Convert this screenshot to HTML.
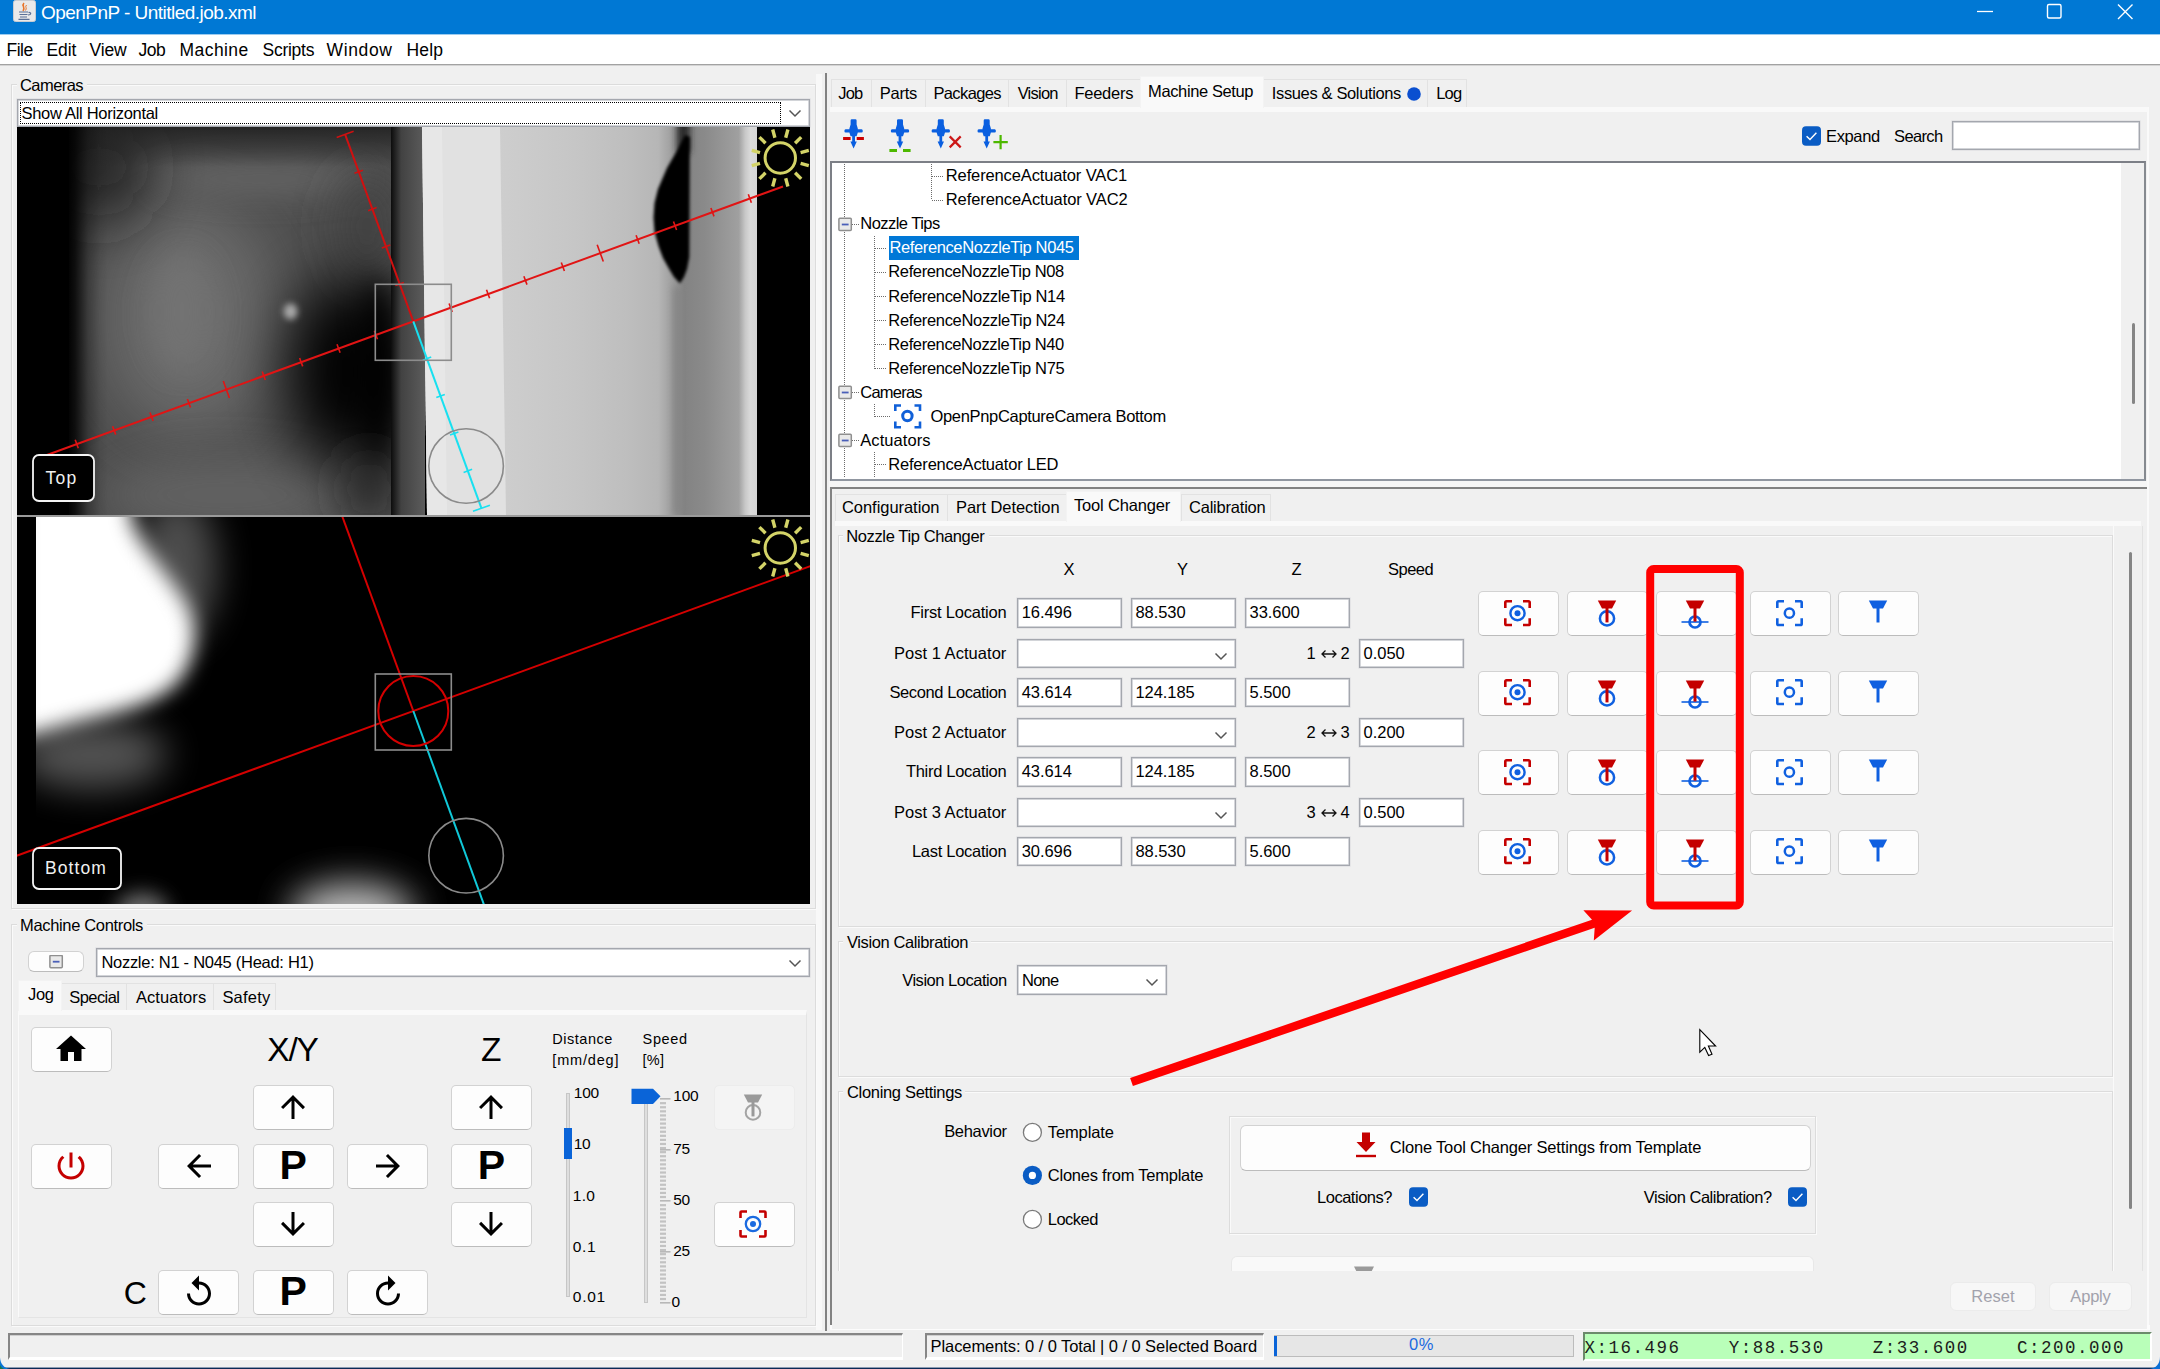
<!DOCTYPE html>
<html><head><meta charset="utf-8"><title>OpenPnP</title>
<style>
html,body{margin:0;padding:0;}
body{width:2160px;height:1369px;overflow:hidden;position:relative;background:#f0f0f0;font-family:"Liberation Sans",sans-serif;}
div{box-sizing:border-box;}
.btn{position:absolute;background:#fdfdfd;border:1px solid #d2d2d2;border-bottom-color:#bcbcbc;border-radius:5px;}
.tf{position:absolute;background:#fff;border:1px solid #a4a7ae;box-shadow:inset 0 0 0 0.7px #c4c6cc, 0 0 0 0.6px #dcdde0;}
.grp{position:absolute;border:1px solid #dcdcdc;box-shadow:1px 1px 0 #fafafa, inset 1px 1px 0 #fafafa;}
.tab{position:absolute;border:1px solid #e2e2e2;border-bottom:none;background:#f0f0f0;}
.tabsel{position:absolute;background:#f9f9f9;border:1px solid #f3f3f3;border-bottom:none;}

</style></head><body>
<div style="position:absolute;left:0px;top:0px;width:2160px;height:34px;background:#0078d4;"></div>
<svg style="position:absolute;left:12.5px;top:0px;" width="24" height="26" viewBox="0 0 24 26"><rect x="0.5" y="0.5" width="22" height="21" rx="2" fill="#e9e9ea" stroke="#c9ccd2"/>
<path d="M11 3 C8 6 13 7 10 11" stroke="#e8742a" stroke-width="1.6" fill="none"/>
<path d="M13.5 5 C11.5 7 14.5 8 12.5 10.5" stroke="#e8742a" stroke-width="1" fill="none"/>
<path d="M6 12 H15 M15.5 12.5 C18.5 12 18.5 15 15 15 M6.5 14.5 H14.5 M7 17 H14 M5.5 19.3 H16.5" stroke="#5b6f96" stroke-width="1.2" fill="none"/></svg>
<div style="position:absolute;left:41.00px;top:3.42px;font:normal 19px/1 'Liberation Sans',sans-serif;letter-spacing:-0.532px;color:#fff;white-space:pre;">OpenPnP - Untitled.job.xml</div>
<svg style="position:absolute;left:1970px;top:0px;" width="190" height="34" viewBox="0 0 190 34"><path d="M7 11.5 H23" stroke="#fff" stroke-width="1.3"/>
<rect x="77.5" y="4.5" width="13.5" height="13.5" rx="1.5" fill="none" stroke="#fff" stroke-width="1.4"/>
<path d="M148 4.5 L162.5 19 M162.5 4.5 L148 19" stroke="#fff" stroke-width="1.4"/></svg>
<div style="position:absolute;left:0px;top:34px;width:2160px;height:30px;background:#fff;"></div>
<div style="position:absolute;left:0px;top:34px;width:2160px;height:1px;background:#9ccbef;"></div>
<div style="position:absolute;left:0px;top:64px;width:2160px;height:1px;background:#a2a2a2;"></div>
<div style="position:absolute;left:0px;top:65px;width:2160px;height:1px;background:#d4d4d4;"></div>
<div style="position:absolute;left:6.60px;top:42.29px;font:normal 17.5px/1 'Liberation Sans',sans-serif;letter-spacing:-0.550px;color:#000;white-space:pre;">File</div>
<div style="position:absolute;left:46.60px;top:42.29px;font:normal 17.5px/1 'Liberation Sans',sans-serif;letter-spacing:-0.164px;color:#000;white-space:pre;">Edit</div>
<div style="position:absolute;left:89.60px;top:42.29px;font:normal 17.5px/1 'Liberation Sans',sans-serif;letter-spacing:-0.154px;color:#000;white-space:pre;">View</div>
<div style="position:absolute;left:138.60px;top:42.29px;font:normal 17.5px/1 'Liberation Sans',sans-serif;letter-spacing:-0.572px;color:#000;white-space:pre;">Job</div>
<div style="position:absolute;left:179.60px;top:42.29px;font:normal 17.5px/1 'Liberation Sans',sans-serif;letter-spacing:0.407px;color:#000;white-space:pre;">Machine</div>
<div style="position:absolute;left:262.60px;top:42.29px;font:normal 17.5px/1 'Liberation Sans',sans-serif;letter-spacing:-0.283px;color:#000;white-space:pre;">Scripts</div>
<div style="position:absolute;left:326.60px;top:42.29px;font:normal 17.5px/1 'Liberation Sans',sans-serif;letter-spacing:0.626px;color:#000;white-space:pre;">Window</div>
<div style="position:absolute;left:406.60px;top:42.29px;font:normal 17.5px/1 'Liberation Sans',sans-serif;letter-spacing:0.127px;color:#000;white-space:pre;">Help</div>
<div style="position:absolute;left:816px;top:74px;width:6px;height:1256px;background:#f8f8f8;"></div>
<div style="position:absolute;left:825px;top:73px;width:2px;height:1258px;background:#828282;"></div>
<div style="position:absolute;left:829px;top:481px;width:1320px;height:6px;background:#f6f6f6;"></div>
<div style="position:absolute;left:830px;top:487px;width:1319px;height:2px;background:#828282;"></div>
<div style="position:absolute;left:830px;top:487px;width:2px;height:838px;background:#828282;"></div>
<div style="position:absolute;left:832px;top:1323px;width:1310px;height:1px;background:#e2e2e2;"></div>
<div style="position:absolute;left:830px;top:1325px;width:1320px;height:5px;background:#fcfcfc;"></div>
<div style="position:absolute;left:2142px;top:526px;width:1px;height:798px;background:#e2e2e2;"></div>
<div style="position:absolute;left:2147px;top:107px;width:2px;height:1218px;background:#fafafa;"></div>
<div style="position:absolute;left:0px;top:1367px;width:2160px;height:1px;background:#8d9bb2;"></div>
<div style="position:absolute;left:0px;top:1368px;width:2160px;height:1px;background:#0c2a56;"></div>
<svg style="position:absolute;left:2146px;top:1355px;" width="14" height="14" viewBox="0 0 14 14"><path d="M14 1.5 C14 9 10 13.2 3.5 14 L14 14 Z" fill="#0b6fd6"/></svg>
<svg style="position:absolute;left:0px;top:1355px;" width="14" height="14" viewBox="0 0 14 14"><path d="M0 2.5 C0.5 9 4 13 10 14 L0 14 Z" fill="#0b76d6"/><path d="M0 10 C1 12.5 2.5 13.6 4.5 14 L0 14 Z" fill="#1a7a4a"/></svg>
<div class="grp" style="left:11px;top:84px;width:805px;height:825px;"></div>
<div style="position:absolute;left:17px;top:74px;width:70px;height:20px;background:#f0f0f0;"></div>
<div style="position:absolute;left:20.00px;top:76.83px;font:normal 16.5px/1 'Liberation Sans',sans-serif;letter-spacing:-0.562px;color:#000;white-space:pre;">Cameras</div>
<div class="tf" style="left:17px;top:99px;width:793px;height:28px;"></div>
<div style="position:absolute;left:20px;top:102px;width:761px;height:22px;border:1px dotted #000;"></div>
<div style="position:absolute;left:21.50px;top:105.03px;font:normal 16.5px/1 'Liberation Sans',sans-serif;letter-spacing:-0.298px;color:#000;white-space:pre;">Show All Horizontal</div>
<svg style="position:absolute;left:786px;top:106px;" width="18" height="14" viewBox="0 0 18 14"><path d="M3.5 4.5 L9 10 L14.5 4.5" fill="none" stroke="#555" stroke-width="1.5"/></svg>
<svg style="position:absolute;left:17px;top:127px;" width="793" height="388" viewBox="0 0 793 388"><defs>
<filter id="b8" x="-150%" y="-150%" width="400%" height="400%"><feGaussianBlur stdDeviation="8"/></filter>
<filter id="b14" x="-150%" y="-150%" width="400%" height="400%"><feGaussianBlur stdDeviation="14"/></filter>
<filter id="b22" x="-150%" y="-150%" width="400%" height="400%"><feGaussianBlur stdDeviation="22"/></filter>
<filter id="b30" x="-200%" y="-200%" width="500%" height="500%"><feGaussianBlur stdDeviation="30"/></filter>
<filter id="b3" x="-150%" y="-150%" width="400%" height="400%"><feGaussianBlur stdDeviation="3"/></filter>
<filter id="b2" x="-150%" y="-150%" width="400%" height="400%"><feGaussianBlur stdDeviation="1.6"/></filter>
<linearGradient id="gl" x1="0" x2="1" y1="0" y2="0"><stop offset="0" stop-color="#000"/><stop offset="0.38" stop-color="#000"/><stop offset="0.5" stop-color="#000" stop-opacity="0.82"/><stop offset="0.7" stop-color="#000" stop-opacity="0.3"/><stop offset="0.88" stop-color="#000" stop-opacity="0.07"/><stop offset="1" stop-color="#000" stop-opacity="0"/></linearGradient>
<linearGradient id="gt" x1="0" x2="0" y1="0" y2="1"><stop offset="0" stop-color="#1c1c1c"/><stop offset="1" stop-color="#1c1c1c" stop-opacity="0"/></linearGradient>
<linearGradient id="gm" gradientUnits="userSpaceOnUse" x1="480" x2="740" y1="0" y2="0"><stop offset="0" stop-color="#cecece"/><stop offset="0.3" stop-color="#c6c6c6"/><stop offset="0.5" stop-color="#bebebe"/><stop offset="0.62" stop-color="#b6b6b6"/><stop offset="0.665" stop-color="#a2a2a2"/><stop offset="0.72" stop-color="#838383"/><stop offset="0.8" stop-color="#8a8a8a"/><stop offset="0.93" stop-color="#a0a0a0"/><stop offset="0.955" stop-color="#c8c8c8"/><stop offset="0.975" stop-color="#dadada"/><stop offset="1" stop-color="#d6d6d6"/></linearGradient>
<linearGradient id="gd" x1="0" x2="1" y1="0" y2="0"><stop offset="0" stop-color="#0c0c0c"/><stop offset="0.3" stop-color="#424242"/><stop offset="1" stop-color="#5c5c5c"/></linearGradient>
<linearGradient id="gr" x1="0" x2="1" y1="0" y2="0"><stop offset="0" stop-color="#7e7e7e"/><stop offset="0.3" stop-color="#8c8c8c"/><stop offset="1" stop-color="#9c9c9c"/></linearGradient>
<clipPath id="cl"><rect x="52" y="0" width="325" height="388"/></clipPath>
</defs>
<rect width="793" height="388" fill="#000"/>
<g clip-path="url(#cl)">
<rect x="52" y="0" width="325" height="388" fill="#4e4e4e"/>
<ellipse cx="172" cy="190" rx="86" ry="118" fill="#6a6a6a" filter="url(#b30)"/>
<ellipse cx="165" cy="185" rx="32" ry="58" fill="#727272" filter="url(#b14)"/>
<ellipse cx="244" cy="52" rx="110" ry="18" fill="#626262" filter="url(#b14)"/>
<ellipse cx="210" cy="368" rx="125" ry="36" fill="#626262" filter="url(#b22)"/>
<ellipse cx="82" cy="40" rx="44" ry="52" fill="#242424" filter="url(#b30)"/>
<ellipse cx="350" cy="100" rx="30" ry="55" fill="#424242" filter="url(#b22)"/>
<ellipse cx="330" cy="245" rx="58" ry="95" fill="#060606" filter="url(#b30)"/>
<ellipse cx="360" cy="250" rx="20" ry="100" fill="#060606" filter="url(#b14)"/>
<ellipse cx="352" cy="362" rx="24" ry="36" fill="#2a2a2a" filter="url(#b22)"/>
<rect x="52" y="-10" width="325" height="50" fill="url(#gt)"/>
<rect x="25" y="0" width="66" height="388" fill="url(#gl)"/>
<ellipse cx="273.5" cy="184.5" rx="7" ry="8" fill="#a8a8a8" filter="url(#b3)"/>
</g>
<rect x="374" y="0" width="34" height="388" fill="url(#gd)"/>
<rect x="480" y="0" width="260" height="388" fill="url(#gm)"/>
<polygon points="405,0 483,0 489,388 410,388" fill="#e1e1e1"/>
<polygon points="405,0 425,0 430,388 410,388" fill="#e7e7e7"/>
<rect x="660" y="-8" width="13" height="34" fill="#2c2c2c" filter="url(#b3)"/>
<polygon points="668,8 661,22 650,41 641,62 637.5,76 636.5,90.6 637.5,105 641.6,119.4 646,131 651.6,141 657,150 663,156.5 667,150 670,142 672.3,130 672.8,10" fill="#020202" filter="url(#b2)"/>
<rect x="655" y="160" width="9" height="228" fill="#787878" opacity="0.45" filter="url(#b3)"/>
<line x1="22.4" y1="330.7" x2="766.0" y2="59.5" stroke="#e11414" stroke-width="2"/><line x1="396.3" y1="194.3" x2="328.1" y2="7.3" stroke="#d01010" stroke-width="2"/><line x1="396.3" y1="194.3" x2="464.5" y2="381.3" stroke="#18e0f0" stroke-width="2"/><line x1="61.3" y1="321.3" x2="58.2" y2="312.8" stroke="#e11414" stroke-width="1.6"/><line x1="98.7" y1="307.6" x2="95.6" y2="299.2" stroke="#e11414" stroke-width="1.6"/><line x1="136.1" y1="294.0" x2="133.0" y2="285.5" stroke="#e11414" stroke-width="1.6"/><line x1="173.5" y1="280.4" x2="170.4" y2="271.9" stroke="#e11414" stroke-width="1.6"/><line x1="212.4" y1="270.9" x2="206.3" y2="254.0" stroke="#e11414" stroke-width="1.6"/><line x1="248.3" y1="253.1" x2="245.2" y2="244.6" stroke="#e11414" stroke-width="1.6"/><line x1="285.7" y1="239.4" x2="282.6" y2="231.0" stroke="#e11414" stroke-width="1.6"/><line x1="323.1" y1="225.8" x2="320.0" y2="217.3" stroke="#e11414" stroke-width="1.6"/><line x1="360.5" y1="212.2" x2="357.4" y2="203.7" stroke="#e11414" stroke-width="1.6"/><line x1="435.2" y1="184.9" x2="432.1" y2="176.4" stroke="#e11414" stroke-width="1.6"/><line x1="472.6" y1="171.3" x2="469.5" y2="162.8" stroke="#e11414" stroke-width="1.6"/><line x1="510.0" y1="157.6" x2="506.9" y2="149.2" stroke="#e11414" stroke-width="1.6"/><line x1="547.4" y1="144.0" x2="544.3" y2="135.5" stroke="#e11414" stroke-width="1.6"/><line x1="586.3" y1="134.6" x2="580.2" y2="117.7" stroke="#e11414" stroke-width="1.6"/><line x1="622.2" y1="116.7" x2="619.1" y2="108.2" stroke="#e11414" stroke-width="1.6"/><line x1="659.6" y1="103.1" x2="656.5" y2="94.6" stroke="#e11414" stroke-width="1.6"/><line x1="697.0" y1="89.4" x2="693.9" y2="81.0" stroke="#e11414" stroke-width="1.6"/><line x1="734.4" y1="75.8" x2="731.3" y2="67.3" stroke="#e11414" stroke-width="1.6"/><line x1="378.4" y1="158.5" x2="386.9" y2="155.4" stroke="#d01010" stroke-width="1.6"/><line x1="405.7" y1="233.2" x2="414.2" y2="230.1" stroke="#18e0f0" stroke-width="1.6"/><line x1="364.8" y1="121.1" x2="373.3" y2="118.0" stroke="#d01010" stroke-width="1.6"/><line x1="419.3" y1="270.6" x2="427.8" y2="267.5" stroke="#18e0f0" stroke-width="1.6"/><line x1="351.2" y1="83.7" x2="359.6" y2="80.6" stroke="#d01010" stroke-width="1.6"/><line x1="433.0" y1="308.0" x2="441.4" y2="304.9" stroke="#18e0f0" stroke-width="1.6"/><line x1="337.5" y1="46.3" x2="346.0" y2="43.2" stroke="#d01010" stroke-width="1.6"/><line x1="446.6" y1="345.4" x2="455.1" y2="342.3" stroke="#18e0f0" stroke-width="1.6"/><line x1="319.7" y1="10.4" x2="336.6" y2="4.3" stroke="#d01010" stroke-width="1.6"/><line x1="456.0" y1="384.3" x2="472.9" y2="378.2" stroke="#18e0f0" stroke-width="1.6"/><rect x="358.3" y="157.3" width="76" height="76" fill="none" stroke="#8c8c8c" stroke-width="1.6"/><circle cx="449.1" cy="339.0" r="37.3" fill="none" stroke="#8a8a8a" stroke-width="1.6"/><circle cx="763.3" cy="31" r="15.2" fill="none" stroke="#d4d468" stroke-width="3"/><line x1="783.6" y1="36.4" x2="791.8" y2="38.6" stroke="#d4d468" stroke-width="3.4"/><line x1="778.1" y1="45.8" x2="784.2" y2="51.9" stroke="#d4d468" stroke-width="3.4"/><line x1="768.7" y1="51.3" x2="770.9" y2="59.5" stroke="#d4d468" stroke-width="3.4"/><line x1="757.9" y1="51.3" x2="755.7" y2="59.5" stroke="#d4d468" stroke-width="3.4"/><line x1="748.5" y1="45.8" x2="742.4" y2="51.9" stroke="#d4d468" stroke-width="3.4"/><line x1="743.0" y1="36.4" x2="734.8" y2="38.6" stroke="#d4d468" stroke-width="3.4"/><line x1="743.0" y1="25.6" x2="734.8" y2="23.4" stroke="#d4d468" stroke-width="3.4"/><line x1="748.5" y1="16.2" x2="742.4" y2="10.1" stroke="#d4d468" stroke-width="3.4"/><line x1="757.9" y1="10.7" x2="755.7" y2="2.5" stroke="#d4d468" stroke-width="3.4"/><line x1="768.7" y1="10.7" x2="770.9" y2="2.5" stroke="#d4d468" stroke-width="3.4"/><line x1="778.1" y1="16.2" x2="784.2" y2="10.1" stroke="#d4d468" stroke-width="3.4"/><line x1="783.6" y1="25.6" x2="791.8" y2="23.4" stroke="#d4d468" stroke-width="3.4"/><rect x="16" y="328" width="61" height="46" rx="6" fill="#000" stroke="#f4f4f4" stroke-width="1.8"/></svg>
<div style="position:absolute;left:45.50px;top:470.49px;font:normal 17.5px/1 'Liberation Sans',sans-serif;letter-spacing:1.261px;color:#f0f0f0;white-space:pre;">Top</div>
<svg style="position:absolute;left:17px;top:517px;" width="793" height="387" viewBox="0 0 793 387"><defs>
<filter id="c10" x="-150%" y="-150%" width="400%" height="400%"><feGaussianBlur stdDeviation="10"/></filter>
<filter id="c18" x="-150%" y="-150%" width="400%" height="400%"><feGaussianBlur stdDeviation="18"/></filter>
<clipPath id="cb"><rect x="19" y="0" width="774" height="387"/></clipPath>
</defs>
<rect width="793" height="387" fill="#000"/>
<g clip-path="url(#cb)">
<path d="M0 -30 L112 -30 L114 0 C120 25 150 55 167 84 C180 105 182 135 164 161 C150 178 135 183 117 190 C95 197 80 200 60 205 L0 222 Z" fill="#fff" filter="url(#c10)"/>
<ellipse cx="160" cy="50" rx="40" ry="75" fill="#fff" opacity="0.3" filter="url(#c18)"/>
<ellipse cx="75" cy="238" rx="75" ry="34" fill="#fff" opacity="0.32" filter="url(#c18)"/>
<ellipse cx="335" cy="396" rx="62" ry="30" fill="#d0d0d0" opacity="0.9" filter="url(#c18)"/>
<ellipse cx="125" cy="394" rx="26" ry="18" fill="#8a8a8a" opacity="0.8" filter="url(#c10)"/>
</g>
<line x1="-7.7" y1="341.4" x2="800.3" y2="46.6" stroke="#d40000" stroke-width="2"/><line x1="396.3" y1="194.0" x2="322.6" y2="-8.0" stroke="#d40000" stroke-width="2"/><line x1="396.3" y1="194.0" x2="470.0" y2="396.0" stroke="#10c8d8" stroke-width="2"/><circle cx="396.3" cy="194.0" r="35" fill="none" stroke="#d40000" stroke-width="2"/><rect x="358.3" y="157.0" width="76" height="76" fill="none" stroke="#8c8c8c" stroke-width="1.6"/><circle cx="449.1" cy="338.7" r="37.3" fill="none" stroke="#8a8a8a" stroke-width="1.6"/><circle cx="763.3" cy="31" r="15.2" fill="none" stroke="#d4d468" stroke-width="3"/><line x1="783.6" y1="36.4" x2="791.8" y2="38.6" stroke="#d4d468" stroke-width="3.4"/><line x1="778.1" y1="45.8" x2="784.2" y2="51.9" stroke="#d4d468" stroke-width="3.4"/><line x1="768.7" y1="51.3" x2="770.9" y2="59.5" stroke="#d4d468" stroke-width="3.4"/><line x1="757.9" y1="51.3" x2="755.7" y2="59.5" stroke="#d4d468" stroke-width="3.4"/><line x1="748.5" y1="45.8" x2="742.4" y2="51.9" stroke="#d4d468" stroke-width="3.4"/><line x1="743.0" y1="36.4" x2="734.8" y2="38.6" stroke="#d4d468" stroke-width="3.4"/><line x1="743.0" y1="25.6" x2="734.8" y2="23.4" stroke="#d4d468" stroke-width="3.4"/><line x1="748.5" y1="16.2" x2="742.4" y2="10.1" stroke="#d4d468" stroke-width="3.4"/><line x1="757.9" y1="10.7" x2="755.7" y2="2.5" stroke="#d4d468" stroke-width="3.4"/><line x1="768.7" y1="10.7" x2="770.9" y2="2.5" stroke="#d4d468" stroke-width="3.4"/><line x1="778.1" y1="16.2" x2="784.2" y2="10.1" stroke="#d4d468" stroke-width="3.4"/><line x1="783.6" y1="25.6" x2="791.8" y2="23.4" stroke="#d4d468" stroke-width="3.4"/><rect x="16" y="331" width="88" height="41" rx="6" fill="#000" stroke="#f4f4f4" stroke-width="1.8"/></svg>
<div style="position:absolute;left:45.00px;top:860.49px;font:normal 17.5px/1 'Liberation Sans',sans-serif;letter-spacing:1.093px;color:#f0f0f0;white-space:pre;">Bottom</div>
<div style="position:absolute;left:17px;top:515px;width:793px;height:2px;background:#9a9a9a;"></div>
<div class="grp" style="left:11px;top:924px;width:805px;height:402px;"></div>
<div style="position:absolute;left:17px;top:914px;width:130px;height:20px;background:#f0f0f0;"></div>
<div style="position:absolute;left:20.00px;top:916.53px;font:normal 16.5px/1 'Liberation Sans',sans-serif;letter-spacing:-0.337px;color:#000;white-space:pre;">Machine Controls</div>
<div class="btn" style="left:28px;top:951px;width:56px;height:21px;border-radius:6px;"></div>
<svg style="position:absolute;left:49px;top:955px;" width="15" height="15" viewBox="0 0 15 15"><rect x="0.9" y="0.4" width="12.4" height="12.4" rx="1" fill="#e9e9e9" stroke="#8f8f8f" stroke-width="1.5"/><path d="M3.8 6.7 H10.5" stroke="#4a5fb8" stroke-width="1.8"/></svg>
<div class="tf" style="left:96px;top:948px;width:714px;height:29px;"></div>
<div style="position:absolute;left:101.40px;top:954.13px;font:normal 16.5px/1 'Liberation Sans',sans-serif;letter-spacing:-0.278px;color:#000;white-space:pre;">Nozzle: N1 - N045 (Head: H1)</div>
<svg style="position:absolute;left:786px;top:956px;" width="18" height="14" viewBox="0 0 18 14"><path d="M3.5 4.5 L9 10 L14.5 4.5" fill="none" stroke="#555" stroke-width="1.5"/></svg>
<div class="tab" style="left:61px;top:983px;width:66px;height:27px;"></div>
<div class="tab" style="left:126px;top:983px;width:88px;height:27px;"></div>
<div class="tab" style="left:213px;top:983px;width:63px;height:27px;"></div>
<div style="position:absolute;left:18px;top:1010px;width:789px;height:308px;background:#f0f0f0;border:1px solid #fafafa;border-top:5px solid #f9f9f9;border-right-color:#e4e4e4;border-bottom-color:#e4e4e4;"></div>
<div class="tabsel" style="left:18px;top:980px;width:44px;height:31px;"></div>
<div style="position:absolute;left:28.10px;top:985.73px;font:normal 16.5px/1 'Liberation Sans',sans-serif;letter-spacing:-0.435px;color:#000;white-space:pre;">Jog</div>
<div style="position:absolute;left:69.30px;top:988.83px;font:normal 16.5px/1 'Liberation Sans',sans-serif;letter-spacing:-0.588px;color:#000;white-space:pre;">Special</div>
<div style="position:absolute;left:136.00px;top:988.83px;font:normal 16.5px/1 'Liberation Sans',sans-serif;letter-spacing:0.056px;color:#000;white-space:pre;">Actuators</div>
<div style="position:absolute;left:222.40px;top:988.83px;font:normal 16.5px/1 'Liberation Sans',sans-serif;letter-spacing:0.204px;color:#000;white-space:pre;">Safety</div>
<div class="btn" style="left:30.7px;top:1026.5px;width:81px;height:45px;"></div>
<svg style="position:absolute;left:53.2px;top:1030.7px;" width="36" height="36" viewBox="0 0 24 24"><path d="M10 20v-6h4v6h5v-8h3L12 3 2 12h3v8z" fill="#000"/></svg>
<div class="btn" style="left:30.7px;top:1143.5px;width:81px;height:45px;"></div>
<svg style="position:absolute;left:53.2px;top:1147.7px;" width="36" height="36" viewBox="0 0 24 24"><path d="M13 3h-2v10h2V3zm4.83 2.17l-1.42 1.42C17.99 7.86 19 9.81 19 12c0 3.87-3.13 7-7 7s-7-3.13-7-7c0-2.19 1.01-4.14 2.58-5.42L6.17 5.17C4.23 6.82 3 9.26 3 12c0 4.97 4.03 9 9 9s9-4.03 9-9c0-2.74-1.23-5.18-3.17-6.83z" fill="#c40000"/></svg>
<div style="position:absolute;left:267.25px;top:1032.94px;font:normal 33.5px/1 'Liberation Sans',sans-serif;letter-spacing:-1.166px;color:#000;white-space:pre;">X/Y</div>
<div style="position:absolute;left:481.05px;top:1032.94px;font:normal 33.5px/1 'Liberation Sans',sans-serif;letter-spacing:-0.964px;color:#000;white-space:pre;">Z</div>
<div class="btn" style="left:252.7px;top:1084.5px;width:81px;height:45px;"></div>
<svg style="position:absolute;left:275.2px;top:1088.7px;" width="36" height="36" viewBox="0 0 24 24"><path d="M4 12l1.41 1.41L11 7.83V20h2V7.83l5.58 5.59L20 12l-8-8-8 8z" fill="#000"/></svg>
<div class="btn" style="left:158.3px;top:1143.5px;width:81px;height:45px;"></div>
<svg style="position:absolute;left:180.8px;top:1147.7px;" width="36" height="36" viewBox="0 0 24 24"><path d="M20 11H7.83l5.59-5.59L12 4l-8 8 8 8 1.41-1.41L7.83 13H20v-2z" fill="#000"/></svg>
<div class="btn" style="left:252.7px;top:1143.5px;width:81px;height:45px;"></div>
<div style="position:absolute;left:279.55px;top:1145.19px;font:bold 41px/1 'Liberation Sans',sans-serif;letter-spacing:0.152px;color:#000;white-space:pre;">P</div>
<div class="btn" style="left:347px;top:1143.5px;width:81px;height:45px;"></div>
<svg style="position:absolute;left:369.5px;top:1147.7px;" width="36" height="36" viewBox="0 0 24 24"><path d="M12 4l-1.41 1.41L16.17 11H4v2h12.17l-5.58 5.59L12 20l8-8z" fill="#000"/></svg>
<div class="btn" style="left:252.7px;top:1201.5px;width:81px;height:45px;"></div>
<svg style="position:absolute;left:275.2px;top:1205.7px;" width="36" height="36" viewBox="0 0 24 24"><path d="M20 12l-1.41-1.41L13 16.17V4h-2v12.17l-5.58-5.59L4 12l8 8 8-8z" fill="#000"/></svg>
<div class="btn" style="left:450.8px;top:1084.5px;width:81px;height:45px;"></div>
<svg style="position:absolute;left:473.3px;top:1088.7px;" width="36" height="36" viewBox="0 0 24 24"><path d="M4 12l1.41 1.41L11 7.83V20h2V7.83l5.58 5.59L20 12l-8-8-8 8z" fill="#000"/></svg>
<div class="btn" style="left:450.8px;top:1143.5px;width:81px;height:45px;"></div>
<div style="position:absolute;left:477.65px;top:1145.19px;font:bold 41px/1 'Liberation Sans',sans-serif;letter-spacing:0.152px;color:#000;white-space:pre;">P</div>
<div class="btn" style="left:450.8px;top:1201.5px;width:81px;height:45px;"></div>
<svg style="position:absolute;left:473.3px;top:1205.7px;" width="36" height="36" viewBox="0 0 24 24"><path d="M20 12l-1.41-1.41L13 16.17V4h-2v12.17l-5.58-5.59L4 12l8 8 8-8z" fill="#000"/></svg>
<div style="position:absolute;left:123.75px;top:1276.96px;font:normal 32px/1 'Liberation Sans',sans-serif;letter-spacing:-1.110px;color:#000;white-space:pre;">C</div>
<div class="btn" style="left:158.3px;top:1269.5px;width:81px;height:45px;"></div>
<svg style="position:absolute;left:180.8px;top:1273.7px;" width="36" height="36" viewBox="0 0 24 24"><path d="M12 5V1L7 6l5 5V7c3.31 0 6 2.69 6 6s-2.69 6-6 6-6-2.69-6-6H4c0 4.42 3.58 8 8 8s8-3.58 8-8-3.58-8-8-8z" fill="#000"/></svg>
<div class="btn" style="left:252.7px;top:1269.5px;width:81px;height:45px;"></div>
<div style="position:absolute;left:279.55px;top:1271.19px;font:bold 41px/1 'Liberation Sans',sans-serif;letter-spacing:0.152px;color:#000;white-space:pre;">P</div>
<div class="btn" style="left:347px;top:1269.5px;width:81px;height:45px;"></div>
<svg style="position:absolute;left:369.5px;top:1273.7px;" width="36" height="36" viewBox="0 0 24 24"><path d="M12 5V1L7 6l5 5V7c3.31 0 6 2.69 6 6s-2.69 6-6 6-6-2.69-6-6H4c0 4.42 3.58 8 8 8s8-3.58 8-8-3.58-8-8-8z" fill="#000" transform="translate(24 0) scale(-1 1)"/></svg>
<div style="position:absolute;left:552.30px;top:1031.93px;font:normal 14.5px/1 'Liberation Sans',sans-serif;letter-spacing:0.511px;color:#000;white-space:pre;">Distance</div>
<div style="position:absolute;left:552.30px;top:1053.03px;font:normal 14.5px/1 'Liberation Sans',sans-serif;letter-spacing:0.820px;color:#000;white-space:pre;">[mm/deg]</div>
<div style="position:absolute;left:642.60px;top:1031.93px;font:normal 14.5px/1 'Liberation Sans',sans-serif;letter-spacing:0.614px;color:#000;white-space:pre;">Speed</div>
<div style="position:absolute;left:642.60px;top:1053.03px;font:normal 14.5px/1 'Liberation Sans',sans-serif;letter-spacing:0.184px;color:#000;white-space:pre;">[%]</div>
<div style="position:absolute;left:566px;top:1093px;width:4px;height:204px;background:#dedede;border:1px solid #c6c6c6;"></div>
<div style="position:absolute;left:564.2px;top:1128px;width:7.5px;height:31px;background:#0a64d8;"></div>
<div style="position:absolute;left:573.80px;top:1084.98px;font:normal 15.5px/1 'Liberation Sans',sans-serif;letter-spacing:-0.287px;color:#000;white-space:pre;">100</div>
<div style="position:absolute;left:573.80px;top:1136.48px;font:normal 15.5px/1 'Liberation Sans',sans-serif;letter-spacing:-0.371px;color:#000;white-space:pre;">10</div>
<div style="position:absolute;left:572.80px;top:1187.68px;font:normal 15.5px/1 'Liberation Sans',sans-serif;letter-spacing:0.318px;color:#000;white-space:pre;">1.0</div>
<div style="position:absolute;left:572.80px;top:1238.68px;font:normal 15.5px/1 'Liberation Sans',sans-serif;letter-spacing:0.651px;color:#000;white-space:pre;">0.1</div>
<div style="position:absolute;left:572.80px;top:1288.68px;font:normal 15.5px/1 'Liberation Sans',sans-serif;letter-spacing:0.708px;color:#000;white-space:pre;">0.01</div>
<div style="position:absolute;left:644px;top:1097px;width:4px;height:206px;background:#dedede;border:1px solid #c6c6c6;"></div>
<svg style="position:absolute;left:631px;top:1088px;" width="31" height="18" viewBox="0 0 31 18"><path d="M0.5 0.8 H22 L29.5 8.3 L22 16 H0.5 Z" fill="#0a64d8"/></svg>
<svg style="position:absolute;left:660px;top:1098px;" width="12" height="208" viewBox="0 0 12 208"><rect x="0" y="4.08" width="6" height="2.2" fill="#c2c2c2"/><rect x="0" y="8.16" width="6" height="2.2" fill="#c2c2c2"/><rect x="0" y="12.24" width="6" height="2.2" fill="#c2c2c2"/><rect x="0" y="16.32" width="6" height="2.2" fill="#c2c2c2"/><rect x="0" y="20.4" width="6" height="2.2" fill="#c2c2c2"/><rect x="0" y="24.48" width="6" height="2.2" fill="#c2c2c2"/><rect x="0" y="28.56" width="6" height="2.2" fill="#c2c2c2"/><rect x="0" y="32.64" width="6" height="2.2" fill="#c2c2c2"/><rect x="0" y="36.72" width="6" height="2.2" fill="#c2c2c2"/><rect x="0" y="40.8" width="6" height="2.2" fill="#c2c2c2"/><rect x="0" y="44.88" width="6" height="2.2" fill="#c2c2c2"/><rect x="0" y="48.96" width="6" height="2.2" fill="#c2c2c2"/><rect x="0" y="53.04" width="6" height="2.2" fill="#c2c2c2"/><rect x="0" y="57.12" width="6" height="2.2" fill="#c2c2c2"/><rect x="0" y="61.2" width="6" height="2.2" fill="#c2c2c2"/><rect x="0" y="65.28" width="6" height="2.2" fill="#c2c2c2"/><rect x="0" y="69.36" width="6" height="2.2" fill="#c2c2c2"/><rect x="0" y="73.44" width="6" height="2.2" fill="#c2c2c2"/><rect x="0" y="77.52" width="6" height="2.2" fill="#c2c2c2"/><rect x="0" y="81.6" width="6" height="2.2" fill="#c2c2c2"/><rect x="0" y="85.68" width="6" height="2.2" fill="#c2c2c2"/><rect x="0" y="89.76" width="6" height="2.2" fill="#c2c2c2"/><rect x="0" y="93.84" width="6" height="2.2" fill="#c2c2c2"/><rect x="0" y="97.92" width="6" height="2.2" fill="#c2c2c2"/><rect x="0" y="106.08" width="6" height="2.2" fill="#c2c2c2"/><rect x="0" y="110.16" width="6" height="2.2" fill="#c2c2c2"/><rect x="0" y="114.24" width="6" height="2.2" fill="#c2c2c2"/><rect x="0" y="118.32" width="6" height="2.2" fill="#c2c2c2"/><rect x="0" y="122.4" width="6" height="2.2" fill="#c2c2c2"/><rect x="0" y="126.48" width="6" height="2.2" fill="#c2c2c2"/><rect x="0" y="130.56" width="6" height="2.2" fill="#c2c2c2"/><rect x="0" y="134.64" width="6" height="2.2" fill="#c2c2c2"/><rect x="0" y="138.72" width="6" height="2.2" fill="#c2c2c2"/><rect x="0" y="142.8" width="6" height="2.2" fill="#c2c2c2"/><rect x="0" y="146.88" width="6" height="2.2" fill="#c2c2c2"/><rect x="0" y="150.96" width="6" height="2.2" fill="#c2c2c2"/><rect x="0" y="155.04" width="6" height="2.2" fill="#c2c2c2"/><rect x="0" y="159.12" width="6" height="2.2" fill="#c2c2c2"/><rect x="0" y="163.2" width="6" height="2.2" fill="#c2c2c2"/><rect x="0" y="167.28" width="6" height="2.2" fill="#c2c2c2"/><rect x="0" y="171.36" width="6" height="2.2" fill="#c2c2c2"/><rect x="0" y="175.44" width="6" height="2.2" fill="#c2c2c2"/><rect x="0" y="179.52" width="6" height="2.2" fill="#c2c2c2"/><rect x="0" y="183.6" width="6" height="2.2" fill="#c2c2c2"/><rect x="0" y="187.68" width="6" height="2.2" fill="#c2c2c2"/><rect x="0" y="191.76" width="6" height="2.2" fill="#c2c2c2"/><rect x="0" y="195.84" width="6" height="2.2" fill="#c2c2c2"/><rect x="0" y="199.92" width="6" height="2.2" fill="#c2c2c2"/><rect x="0" y="0" width="10.5" height="1.6" fill="#b8b8b8"/><rect x="0" y="51" width="10.5" height="1.6" fill="#b8b8b8"/><rect x="0" y="102" width="10.5" height="1.6" fill="#b8b8b8"/><rect x="0" y="153" width="10.5" height="1.6" fill="#b8b8b8"/><rect x="0" y="204" width="10.5" height="1.6" fill="#b8b8b8"/></svg>
<div style="position:absolute;left:673.30px;top:1088.28px;font:normal 15.5px/1 'Liberation Sans',sans-serif;letter-spacing:-0.287px;color:#000;white-space:pre;">100</div>
<div style="position:absolute;left:673.30px;top:1140.98px;font:normal 15.5px/1 'Liberation Sans',sans-serif;letter-spacing:-0.371px;color:#000;white-space:pre;">75</div>
<div style="position:absolute;left:673.30px;top:1192.18px;font:normal 15.5px/1 'Liberation Sans',sans-serif;letter-spacing:-0.371px;color:#000;white-space:pre;">50</div>
<div style="position:absolute;left:673.30px;top:1243.18px;font:normal 15.5px/1 'Liberation Sans',sans-serif;letter-spacing:-0.371px;color:#000;white-space:pre;">25</div>
<div style="position:absolute;left:671.50px;top:1293.88px;font:normal 15.5px/1 'Liberation Sans',sans-serif;letter-spacing:-0.621px;color:#000;white-space:pre;">0</div>
<div class="btn" style="left:714px;top:1084.5px;width:81px;height:45px;background:#f4f4f4;border-color:#ececec;"></div>
<svg style="position:absolute;left:738px;top:1094.1px;" width="30" height="30" viewBox="0 0 30 30"><path d="M5.8 0.4 H24.2 L20 8.4 H10 Z" fill="#9a9a9a"/><circle cx="15" cy="18.4" r="7.3" fill="none" stroke="#a4a4a4" stroke-width="2"/><path d="M15 8 V22.4" stroke="#9a9a9a" stroke-width="3"/></svg>
<div class="btn" style="left:714px;top:1201.5px;width:81px;height:45px;"></div>
<svg style="position:absolute;left:739px;top:1210px;" width="28" height="28" viewBox="0 0 28 28"><path d="M1.5 8 V2.5 Q1.5 1.5 2.5 1.5 H8 M20 1.5 H25.5 Q26.5 1.5 26.5 2.5 V8 M26.5 20 V25.5 Q26.5 26.5 25.5 26.5 H20 M8 26.5 H2.5 Q1.5 26.5 1.5 25.5 V20" fill="none" stroke="#c40000" stroke-width="2.6"/>
<circle cx="14" cy="14" r="7.2" fill="none" stroke="#1a6ae0" stroke-width="2.3"/><circle cx="14" cy="14" r="3" fill="#1a6ae0"/></svg>
<div class="tab" style="left:830.5px;top:79px;width:41px;height:28px;"></div>
<div class="tab" style="left:870.5px;top:79px;width:55px;height:28px;"></div>
<div class="tab" style="left:924.5px;top:79px;width:84.8px;height:28px;"></div>
<div class="tab" style="left:1008.3px;top:79px;width:58.3px;height:28px;"></div>
<div class="tab" style="left:1065.6px;top:79px;width:75.6px;height:28px;"></div>
<div class="tab" style="left:1263.3px;top:79px;width:164.7px;height:28px;"></div>
<div class="tab" style="left:1427px;top:79px;width:40px;height:28px;"></div>
<div style="position:absolute;left:830px;top:107px;width:1318px;height:5px;background:#f9f9f9;"></div>
<div class="tabsel" style="left:1140px;top:76px;width:124px;height:32px;"></div>
<div style="position:absolute;left:838.30px;top:85.23px;font:normal 16.5px/1 'Liberation Sans',sans-serif;letter-spacing:-0.801px;color:#000;white-space:pre;">Job</div>
<div style="position:absolute;left:879.80px;top:85.23px;font:normal 16.5px/1 'Liberation Sans',sans-serif;letter-spacing:-0.262px;color:#000;white-space:pre;">Parts</div>
<div style="position:absolute;left:933.40px;top:85.23px;font:normal 16.5px/1 'Liberation Sans',sans-serif;letter-spacing:-0.608px;color:#000;white-space:pre;">Packages</div>
<div style="position:absolute;left:1017.70px;top:85.23px;font:normal 16.5px/1 'Liberation Sans',sans-serif;letter-spacing:-0.774px;color:#000;white-space:pre;">Vision</div>
<div style="position:absolute;left:1074.40px;top:85.23px;font:normal 16.5px/1 'Liberation Sans',sans-serif;letter-spacing:-0.233px;color:#000;white-space:pre;">Feeders</div>
<div style="position:absolute;left:1271.80px;top:85.23px;font:normal 16.5px/1 'Liberation Sans',sans-serif;letter-spacing:-0.363px;color:#000;white-space:pre;">Issues &amp; Solutions</div>
<div style="position:absolute;left:1436.20px;top:85.23px;font:normal 16.5px/1 'Liberation Sans',sans-serif;letter-spacing:-0.777px;color:#000;white-space:pre;">Log</div>
<div style="position:absolute;left:1148.10px;top:82.63px;font:normal 16.5px/1 'Liberation Sans',sans-serif;letter-spacing:-0.390px;color:#000;white-space:pre;">Machine Setup</div>
<svg style="position:absolute;left:1406px;top:86px;" width="16" height="16" viewBox="0 0 16 16"><circle cx="8" cy="8" r="6.8" fill="#0a4fd0"/></svg>
<svg style="position:absolute;left:830px;top:110px;" width="200" height="50" viewBox="830 110 200 50"><path transform="translate(853.6 0)" d="M -3,120.5 Q -3,119.2 -1.8,119.2 H 1.8 Q 3,119.2 3,120.5 V 124.5 L 4.2,128.5 V 129.2 H 8 Q 9.2,129.2 9.2,130.9 Q 9.2,132.6 8,132.6 H 4.2 L 3,136.3 H 1.4 V 141.5 H 3.2 L 0,148.6 L -3.2,141.5 H -1.4 V 136.3 H -3 L -4.2,132.6 H -8 Q -9.2,132.6 -9.2,130.9 Q -9.2,129.2 -8,129.2 H -4.2 V 128.5 L -3,124.5 Z" fill="#0a5fe0"/><path d="M843.1 138.5 H850.6 M856.7 138.5 H863.9" stroke="#cc0000" stroke-width="2.9"/><path transform="translate(900 0)" d="M -3,120.5 Q -3,119.2 -1.8,119.2 H 1.8 Q 3,119.2 3,120.5 V 124.5 L 4.2,128.5 V 129.2 H 8 Q 9.2,129.2 9.2,130.9 Q 9.2,132.6 8,132.6 H 4.2 L 3,136.3 H 1.4 V 141.5 H 3.2 L 0,148.6 L -3.2,141.5 H -1.4 V 136.3 H -3 L -4.2,132.6 H -8 Q -9.2,132.6 -9.2,130.9 Q -9.2,129.2 -8,129.2 H -4.2 V 128.5 L -3,124.5 Z" fill="#0a5fe0"/><path d="M889.4 150.5 H897 M903 150.5 H910.6" stroke="#4db800" stroke-width="2.9"/><path transform="translate(940.8 0)" d="M -3,120.5 Q -3,119.2 -1.8,119.2 H 1.8 Q 3,119.2 3,120.5 V 124.5 L 4.2,128.5 V 129.2 H 8 Q 9.2,129.2 9.2,130.9 Q 9.2,132.6 8,132.6 H 4.2 L 3,136.3 H 1.4 V 141.5 H 3.2 L 0,148.6 L -3.2,141.5 H -1.4 V 136.3 H -3 L -4.2,132.6 H -8 Q -9.2,132.6 -9.2,130.9 Q -9.2,129.2 -8,129.2 H -4.2 V 128.5 L -3,124.5 Z" fill="#0a5fe0"/><path d="M949.7 136.4 L960.7 147.4 M960.7 136.4 L949.7 147.4" stroke="#cc1818" stroke-width="2.2"/><path transform="translate(986.7 0)" d="M -3,120.5 Q -3,119.2 -1.8,119.2 H 1.8 Q 3,119.2 3,120.5 V 124.5 L 4.2,128.5 V 129.2 H 8 Q 9.2,129.2 9.2,130.9 Q 9.2,132.6 8,132.6 H 4.2 L 3,136.3 H 1.4 V 141.5 H 3.2 L 0,148.6 L -3.2,141.5 H -1.4 V 136.3 H -3 L -4.2,132.6 H -8 Q -9.2,132.6 -9.2,130.9 Q -9.2,129.2 -8,129.2 H -4.2 V 128.5 L -3,124.5 Z" fill="#0a5fe0"/><path d="M993.4 142.1 H1007.8 M1000.6 134.9 V149.3" stroke="#4db800" stroke-width="2.2"/></svg>
<svg style="position:absolute;left:1801px;top:125px;" width="22" height="22" viewBox="0 0 22 22"><rect x="1" y="1.2" width="19" height="19.6" rx="4" fill="#0a5cc4"/><path d="M5.6 11.2 L9 14.6 L15.4 7.8" fill="none" stroke="#fff" stroke-width="1.4"/></svg>
<div style="position:absolute;left:1826.00px;top:127.63px;font:normal 16.5px/1 'Liberation Sans',sans-serif;letter-spacing:-0.361px;color:#000;white-space:pre;">Expand</div>
<div style="position:absolute;left:1894.10px;top:127.63px;font:normal 16.5px/1 'Liberation Sans',sans-serif;letter-spacing:-0.664px;color:#000;white-space:pre;">Search</div>
<div class="tf" style="left:1952px;top:121px;width:188px;height:29px;"></div>
<div style="position:absolute;left:830px;top:161px;width:1316px;height:320px;background:#fff;border:2px solid #7c7f86;border-right-color:#868a90;border-bottom-color:#9096a0;"></div>
<div style="position:absolute;left:2121px;top:163px;width:23px;height:316px;background:#f0f0f0;"></div>
<div style="position:absolute;left:2132px;top:322.5px;width:3px;height:81px;background:#858585;border-radius:1.5px;"></div>
<div style="position:absolute;left:889px;top:236px;width:190px;height:24px;background:#0078d7;"></div>
<div style="position:absolute;left:945.80px;top:167.23px;font:normal 16.5px/1 'Liberation Sans',sans-serif;letter-spacing:-0.129px;color:#000;white-space:pre;">ReferenceActuator VAC1</div>
<div style="position:absolute;left:945.80px;top:191.29px;font:normal 16.5px/1 'Liberation Sans',sans-serif;letter-spacing:-0.102px;color:#000;white-space:pre;">ReferenceActuator VAC2</div>
<div style="position:absolute;left:860.30px;top:215.35px;font:normal 16.5px/1 'Liberation Sans',sans-serif;letter-spacing:-0.544px;color:#000;white-space:pre;">Nozzle Tips</div>
<div style="position:absolute;left:889.50px;top:239.41px;font:normal 16.5px/1 'Liberation Sans',sans-serif;letter-spacing:-0.387px;color:#fff;white-space:pre;">ReferenceNozzleTip N045</div>
<div style="position:absolute;left:888.30px;top:263.47px;font:normal 16.5px/1 'Liberation Sans',sans-serif;letter-spacing:-0.374px;color:#000;white-space:pre;">ReferenceNozzleTip N08</div>
<div style="position:absolute;left:888.30px;top:287.53px;font:normal 16.5px/1 'Liberation Sans',sans-serif;letter-spacing:-0.329px;color:#000;white-space:pre;">ReferenceNozzleTip N14</div>
<div style="position:absolute;left:888.30px;top:311.59px;font:normal 16.5px/1 'Liberation Sans',sans-serif;letter-spacing:-0.329px;color:#000;white-space:pre;">ReferenceNozzleTip N24</div>
<div style="position:absolute;left:888.30px;top:335.65px;font:normal 16.5px/1 'Liberation Sans',sans-serif;letter-spacing:-0.374px;color:#000;white-space:pre;">ReferenceNozzleTip N40</div>
<div style="position:absolute;left:888.30px;top:359.71px;font:normal 16.5px/1 'Liberation Sans',sans-serif;letter-spacing:-0.351px;color:#000;white-space:pre;">ReferenceNozzleTip N75</div>
<div style="position:absolute;left:860.30px;top:383.77px;font:normal 16.5px/1 'Liberation Sans',sans-serif;letter-spacing:-0.777px;color:#000;white-space:pre;">Cameras</div>
<div style="position:absolute;left:930.40px;top:407.83px;font:normal 16.5px/1 'Liberation Sans',sans-serif;letter-spacing:-0.314px;color:#000;white-space:pre;">OpenPnpCaptureCamera Bottom</div>
<div style="position:absolute;left:860.30px;top:431.89px;font:normal 16.5px/1 'Liberation Sans',sans-serif;letter-spacing:0.056px;color:#000;white-space:pre;">Actuators</div>
<div style="position:absolute;left:888.30px;top:455.95px;font:normal 16.5px/1 'Liberation Sans',sans-serif;letter-spacing:-0.203px;color:#000;white-space:pre;">ReferenceActuator LED</div>
<svg style="position:absolute;left:832px;top:164px;" width="1289" height="314" viewBox="832 164 1289 314"><path d="M844.5 164 V478" fill="none" stroke="#6c6c6c" stroke-width="1" stroke-dasharray="1 1"/><path d="M931.5 164 V200" fill="none" stroke="#6c6c6c" stroke-width="1" stroke-dasharray="1 1"/><path d="M932 176.5 H944" fill="none" stroke="#6c6c6c" stroke-width="1" stroke-dasharray="1 1"/><path d="M932 200.5 H944" fill="none" stroke="#6c6c6c" stroke-width="1" stroke-dasharray="1 1"/><path d="M874.5 236 V369" fill="none" stroke="#6c6c6c" stroke-width="1" stroke-dasharray="1 1"/><path d="M875 248.5 H887" fill="none" stroke="#6c6c6c" stroke-width="1" stroke-dasharray="1 1"/><path d="M875 272.5 H887" fill="none" stroke="#6c6c6c" stroke-width="1" stroke-dasharray="1 1"/><path d="M875 296.5 H887" fill="none" stroke="#6c6c6c" stroke-width="1" stroke-dasharray="1 1"/><path d="M875 320.5 H887" fill="none" stroke="#6c6c6c" stroke-width="1" stroke-dasharray="1 1"/><path d="M875 344.5 H887" fill="none" stroke="#6c6c6c" stroke-width="1" stroke-dasharray="1 1"/><path d="M875 368.5 H887" fill="none" stroke="#6c6c6c" stroke-width="1" stroke-dasharray="1 1"/><path d="M874.5 404 V417" fill="none" stroke="#6c6c6c" stroke-width="1" stroke-dasharray="1 1"/><path d="M875 416.5 H890" fill="none" stroke="#6c6c6c" stroke-width="1" stroke-dasharray="1 1"/><path d="M874.5 452 V478" fill="none" stroke="#6c6c6c" stroke-width="1" stroke-dasharray="1 1"/><path d="M875 464.5 H887" fill="none" stroke="#6c6c6c" stroke-width="1" stroke-dasharray="1 1"/><path d="M852 224.5 H859" fill="none" stroke="#6c6c6c" stroke-width="1" stroke-dasharray="1 1"/><rect x="838.9" y="218.2" width="12.4" height="12.4" rx="1" fill="#e9e9e9" stroke="#8f8f8f" stroke-width="1.5"/><path d="M841.8 224.5 H848.6" stroke="#4a5fb8" stroke-width="1.8"/><path d="M852 392.5 H859" fill="none" stroke="#6c6c6c" stroke-width="1" stroke-dasharray="1 1"/><rect x="838.9" y="386.2" width="12.4" height="12.4" rx="1" fill="#e9e9e9" stroke="#8f8f8f" stroke-width="1.5"/><path d="M841.8 392.5 H848.6" stroke="#4a5fb8" stroke-width="1.8"/><path d="M852 440.5 H859" fill="none" stroke="#6c6c6c" stroke-width="1" stroke-dasharray="1 1"/><rect x="838.9" y="434.2" width="12.4" height="12.4" rx="1" fill="#e9e9e9" stroke="#8f8f8f" stroke-width="1.5"/><path d="M841.8 440.5 H848.6" stroke="#4a5fb8" stroke-width="1.8"/></svg>
<svg style="position:absolute;left:893px;top:403px;" width="30" height="27" viewBox="0 0 30 27"><path d="M2.3 8 V2.5 H8 M21.5 2.5 H27 V8 M27 18.5 V24.2 H21.5 M8 24.2 H2.3 V18.5" fill="none" stroke="#1060d8" stroke-width="2.6"/>
<circle cx="14.4" cy="13" r="4.7" fill="none" stroke="#1060d8" stroke-width="3"/></svg>
<div class="tab" style="left:835.4px;top:494px;width:112.6px;height:27px;"></div>
<div class="tab" style="left:947px;top:494px;width:119.8px;height:27px;"></div>
<div class="tab" style="left:1181px;top:494px;width:89.5px;height:27px;"></div>
<div style="position:absolute;left:835px;top:521px;width:1306px;height:5px;background:#f9f9f9;"></div>
<div class="tabsel" style="left:1066px;top:491px;width:115px;height:31px;"></div>
<div style="position:absolute;left:842.00px;top:499.43px;font:normal 16.5px/1 'Liberation Sans',sans-serif;letter-spacing:-0.050px;color:#000;white-space:pre;">Configuration</div>
<div style="position:absolute;left:956.00px;top:499.43px;font:normal 16.5px/1 'Liberation Sans',sans-serif;letter-spacing:-0.075px;color:#000;white-space:pre;">Part Detection</div>
<div style="position:absolute;left:1189.00px;top:499.43px;font:normal 16.5px/1 'Liberation Sans',sans-serif;letter-spacing:-0.216px;color:#000;white-space:pre;">Calibration</div>
<div style="position:absolute;left:1074.00px;top:496.53px;font:normal 16.5px/1 'Liberation Sans',sans-serif;letter-spacing:-0.179px;color:#000;white-space:pre;">Tool Changer</div>
<div style="position:absolute;left:2113px;top:526px;width:28px;height:744px;background:#f0f0f0;border-left:1px solid #fafafa;"></div>
<div style="position:absolute;left:2129px;top:552px;width:3px;height:657px;background:#858585;border-radius:1.5px;"></div>
<div class="grp" style="left:838px;top:535px;width:1275px;height:392px;"></div>
<div style="position:absolute;left:843px;top:527px;width:146px;height:18px;background:#f0f0f0;"></div>
<div style="position:absolute;left:846.30px;top:527.83px;font:normal 16.5px/1 'Liberation Sans',sans-serif;letter-spacing:-0.384px;color:#000;white-space:pre;">Nozzle Tip Changer</div>
<div style="position:absolute;left:1063.50px;top:560.63px;font:normal 16.5px/1 'Liberation Sans',sans-serif;letter-spacing:0.000px;color:#000;white-space:pre;">X</div>
<div style="position:absolute;left:1177.00px;top:560.63px;font:normal 16.5px/1 'Liberation Sans',sans-serif;letter-spacing:0.000px;color:#000;white-space:pre;">Y</div>
<div style="position:absolute;left:1291.46px;top:560.63px;font:normal 16.5px/1 'Liberation Sans',sans-serif;letter-spacing:0.000px;color:#000;white-space:pre;">Z</div>
<div style="position:absolute;left:1388.10px;top:560.63px;font:normal 16.5px/1 'Liberation Sans',sans-serif;letter-spacing:-0.543px;color:#000;white-space:pre;">Speed</div>
<div style="position:absolute;left:910.40px;top:604.23px;font:normal 16.5px/1 'Liberation Sans',sans-serif;letter-spacing:-0.217px;color:#000;white-space:pre;">First Location</div>
<div class="tf" style="left:1017px;top:598px;width:105px;height:30px;"></div>
<div style="position:absolute;left:1021.70px;top:604.23px;font:normal 16.5px/1 'Liberation Sans',sans-serif;letter-spacing:-0.051px;color:#000;white-space:pre;">16.496</div>
<div class="tf" style="left:1131px;top:598px;width:105px;height:30px;"></div>
<div style="position:absolute;left:1135.40px;top:604.23px;font:normal 16.5px/1 'Liberation Sans',sans-serif;letter-spacing:-0.051px;color:#000;white-space:pre;">88.530</div>
<div class="tf" style="left:1245px;top:598px;width:105px;height:30px;"></div>
<div style="position:absolute;left:1249.50px;top:604.23px;font:normal 16.5px/1 'Liberation Sans',sans-serif;letter-spacing:-0.051px;color:#000;white-space:pre;">33.600</div>
<div style="position:absolute;left:893.90px;top:644.63px;font:normal 16.5px/1 'Liberation Sans',sans-serif;letter-spacing:0.040px;color:#000;white-space:pre;">Post 1 Actuator</div>
<div class="tf" style="left:1017px;top:639px;width:219px;height:29px;"></div>
<svg style="position:absolute;left:1212px;top:648.5px;" width="18" height="14" viewBox="0 0 18 14"><path d="M3.5 4.5 L9 10 L14.5 4.5" fill="none" stroke="#555" stroke-width="1.5"/></svg>
<div style="position:absolute;left:1340.42px;top:644.63px;font:normal 16.5px/1 'Liberation Sans',sans-serif;letter-spacing:0.000px;color:#000;white-space:pre;">2</div>
<div style="position:absolute;left:1306.50px;top:644.63px;font:normal 16.5px/1 'Liberation Sans',sans-serif;letter-spacing:0.000px;color:#000;white-space:pre;">1</div>
<svg style="position:absolute;left:1319.5px;top:647.5px;" width="18" height="12" viewBox="0 0 18 12"><path d="M2 6 H16 M5.5 2.5 L2 6 L5.5 9.5 M12.5 2.5 L16 6 L12.5 9.5" fill="none" stroke="#111" stroke-width="1.3"/></svg>
<div class="tf" style="left:1359px;top:639px;width:105px;height:29px;"></div>
<div style="position:absolute;left:1363.60px;top:644.63px;font:normal 16.5px/1 'Liberation Sans',sans-serif;letter-spacing:-0.050px;color:#000;white-space:pre;">0.050</div>
<div style="position:absolute;left:889.40px;top:683.73px;font:normal 16.5px/1 'Liberation Sans',sans-serif;letter-spacing:-0.395px;color:#000;white-space:pre;">Second Location</div>
<div class="tf" style="left:1017px;top:678px;width:105px;height:29px;"></div>
<div style="position:absolute;left:1021.70px;top:683.73px;font:normal 16.5px/1 'Liberation Sans',sans-serif;letter-spacing:-0.051px;color:#000;white-space:pre;">43.614</div>
<div class="tf" style="left:1131px;top:678px;width:105px;height:29px;"></div>
<div style="position:absolute;left:1135.40px;top:683.73px;font:normal 16.5px/1 'Liberation Sans',sans-serif;letter-spacing:-0.052px;color:#000;white-space:pre;">124.185</div>
<div class="tf" style="left:1245px;top:678px;width:105px;height:29px;"></div>
<div style="position:absolute;left:1249.50px;top:683.73px;font:normal 16.5px/1 'Liberation Sans',sans-serif;letter-spacing:-0.050px;color:#000;white-space:pre;">5.500</div>
<div style="position:absolute;left:893.90px;top:724.13px;font:normal 16.5px/1 'Liberation Sans',sans-serif;letter-spacing:0.040px;color:#000;white-space:pre;">Post 2 Actuator</div>
<div class="tf" style="left:1017px;top:718px;width:219px;height:29px;"></div>
<svg style="position:absolute;left:1212px;top:727.5px;" width="18" height="14" viewBox="0 0 18 14"><path d="M3.5 4.5 L9 10 L14.5 4.5" fill="none" stroke="#555" stroke-width="1.5"/></svg>
<div style="position:absolute;left:1340.42px;top:724.13px;font:normal 16.5px/1 'Liberation Sans',sans-serif;letter-spacing:0.000px;color:#000;white-space:pre;">3</div>
<div style="position:absolute;left:1306.50px;top:724.13px;font:normal 16.5px/1 'Liberation Sans',sans-serif;letter-spacing:0.000px;color:#000;white-space:pre;">2</div>
<svg style="position:absolute;left:1319.5px;top:726.5px;" width="18" height="12" viewBox="0 0 18 12"><path d="M2 6 H16 M5.5 2.5 L2 6 L5.5 9.5 M12.5 2.5 L16 6 L12.5 9.5" fill="none" stroke="#111" stroke-width="1.3"/></svg>
<div class="tf" style="left:1359px;top:718px;width:105px;height:29px;"></div>
<div style="position:absolute;left:1363.60px;top:724.13px;font:normal 16.5px/1 'Liberation Sans',sans-serif;letter-spacing:-0.050px;color:#000;white-space:pre;">0.200</div>
<div style="position:absolute;left:905.90px;top:763.23px;font:normal 16.5px/1 'Liberation Sans',sans-serif;letter-spacing:-0.290px;color:#000;white-space:pre;">Third Location</div>
<div class="tf" style="left:1017px;top:757px;width:105px;height:30px;"></div>
<div style="position:absolute;left:1021.70px;top:763.23px;font:normal 16.5px/1 'Liberation Sans',sans-serif;letter-spacing:-0.051px;color:#000;white-space:pre;">43.614</div>
<div class="tf" style="left:1131px;top:757px;width:105px;height:30px;"></div>
<div style="position:absolute;left:1135.40px;top:763.23px;font:normal 16.5px/1 'Liberation Sans',sans-serif;letter-spacing:-0.052px;color:#000;white-space:pre;">124.185</div>
<div class="tf" style="left:1245px;top:757px;width:105px;height:30px;"></div>
<div style="position:absolute;left:1249.50px;top:763.23px;font:normal 16.5px/1 'Liberation Sans',sans-serif;letter-spacing:-0.050px;color:#000;white-space:pre;">8.500</div>
<div style="position:absolute;left:893.90px;top:803.63px;font:normal 16.5px/1 'Liberation Sans',sans-serif;letter-spacing:0.040px;color:#000;white-space:pre;">Post 3 Actuator</div>
<div class="tf" style="left:1017px;top:798px;width:219px;height:29px;"></div>
<svg style="position:absolute;left:1212px;top:807.5px;" width="18" height="14" viewBox="0 0 18 14"><path d="M3.5 4.5 L9 10 L14.5 4.5" fill="none" stroke="#555" stroke-width="1.5"/></svg>
<div style="position:absolute;left:1340.42px;top:803.63px;font:normal 16.5px/1 'Liberation Sans',sans-serif;letter-spacing:0.000px;color:#000;white-space:pre;">4</div>
<div style="position:absolute;left:1306.50px;top:803.63px;font:normal 16.5px/1 'Liberation Sans',sans-serif;letter-spacing:0.000px;color:#000;white-space:pre;">3</div>
<svg style="position:absolute;left:1319.5px;top:806.5px;" width="18" height="12" viewBox="0 0 18 12"><path d="M2 6 H16 M5.5 2.5 L2 6 L5.5 9.5 M12.5 2.5 L16 6 L12.5 9.5" fill="none" stroke="#111" stroke-width="1.3"/></svg>
<div class="tf" style="left:1359px;top:798px;width:105px;height:29px;"></div>
<div style="position:absolute;left:1363.60px;top:803.63px;font:normal 16.5px/1 'Liberation Sans',sans-serif;letter-spacing:-0.050px;color:#000;white-space:pre;">0.500</div>
<div style="position:absolute;left:911.90px;top:842.63px;font:normal 16.5px/1 'Liberation Sans',sans-serif;letter-spacing:-0.281px;color:#000;white-space:pre;">Last Location</div>
<div class="tf" style="left:1017px;top:837px;width:105px;height:29px;"></div>
<div style="position:absolute;left:1021.70px;top:842.63px;font:normal 16.5px/1 'Liberation Sans',sans-serif;letter-spacing:-0.051px;color:#000;white-space:pre;">30.696</div>
<div class="tf" style="left:1131px;top:837px;width:105px;height:29px;"></div>
<div style="position:absolute;left:1135.40px;top:842.63px;font:normal 16.5px/1 'Liberation Sans',sans-serif;letter-spacing:-0.051px;color:#000;white-space:pre;">88.530</div>
<div class="tf" style="left:1245px;top:837px;width:105px;height:29px;"></div>
<div style="position:absolute;left:1249.50px;top:842.63px;font:normal 16.5px/1 'Liberation Sans',sans-serif;letter-spacing:-0.050px;color:#000;white-space:pre;">5.600</div>
<div class="btn" style="left:1478px;top:591px;width:81px;height:45px;"></div>
<div class="btn" style="left:1566.5px;top:591px;width:81px;height:45px;"></div>
<div class="btn" style="left:1655.5px;top:591px;width:81px;height:45px;"></div>
<div class="btn" style="left:1750px;top:591px;width:81px;height:45px;"></div>
<div class="btn" style="left:1838.3px;top:591px;width:81px;height:45px;"></div>
<svg style="position:absolute;left:1504.2px;top:599.5px;" width="27" height="27" viewBox="0 0 27 27"><path d="M1.3 8 V2.6 Q1.3 1.3 2.6 1.3 H8 M19 1.3 H24.4 Q25.7 1.3 25.7 2.6 V8 M25.7 18.3 V23.7 Q25.7 25 24.4 25 H19 M8 25 H2.6 Q1.3 25 1.3 23.7 V18.3" fill="none" stroke="#c40000" stroke-width="2.6"/><circle cx="13.5" cy="13.2" r="7.1" fill="none" stroke="#1060e0" stroke-width="2.4"/><circle cx="13.5" cy="13.2" r="3" fill="#1060e0"/></svg>
<svg style="position:absolute;left:1591.5px;top:600px;" width="30" height="30" viewBox="0 0 30 30"><path d="M5.8 0.4 H24.2 L20 8.4 H10 Z" fill="#c40000"/><circle cx="15" cy="18.4" r="7.1" fill="none" stroke="#1060e0" stroke-width="2.5"/><path d="M15 8 V22.4" stroke="#c40000" stroke-width="3"/></svg>
<svg style="position:absolute;left:1680px;top:600px;" width="30" height="32" viewBox="0 0 30 32"><path d="M5.8 0.4 H24.2 L20 8.4 H10 Z" fill="#c40000"/><circle cx="15" cy="22" r="5.5" fill="none" stroke="#1060e0" stroke-width="2.7"/><path d="M1.5 22 H28.5" stroke="#1060e0" stroke-width="1.6"/><path d="M15 8 V21.6" stroke="#c40000" stroke-width="3"/></svg>
<svg style="position:absolute;left:1776px;top:599.5px;" width="27" height="27" viewBox="0 0 27 27"><path d="M1.3 8 V2.6 Q1.3 1.3 2.6 1.3 H8 M19 1.3 H24.4 Q25.7 1.3 25.7 2.6 V8 M25.7 18.3 V23.7 Q25.7 25 24.4 25 H19 M8 25 H2.6 Q1.3 25 1.3 23.7 V18.3" fill="none" stroke="#1060e0" stroke-width="2.6"/><circle cx="13.4" cy="13.2" r="4.6" fill="none" stroke="#1060e0" stroke-width="2.5"/></svg>
<svg style="position:absolute;left:1862.6px;top:600px;" width="30" height="30" viewBox="0 0 30 30"><path d="M5.8 0.4 H24.2 L20 8.4 H10 Z" fill="#1060e0"/><path d="M15 8 V22.5" stroke="#1060e0" stroke-width="3"/></svg>
<div class="btn" style="left:1478px;top:670.5px;width:81px;height:45px;"></div>
<div class="btn" style="left:1566.5px;top:670.5px;width:81px;height:45px;"></div>
<div class="btn" style="left:1655.5px;top:670.5px;width:81px;height:45px;"></div>
<div class="btn" style="left:1750px;top:670.5px;width:81px;height:45px;"></div>
<div class="btn" style="left:1838.3px;top:670.5px;width:81px;height:45px;"></div>
<svg style="position:absolute;left:1504.2px;top:679px;" width="27" height="27" viewBox="0 0 27 27"><path d="M1.3 8 V2.6 Q1.3 1.3 2.6 1.3 H8 M19 1.3 H24.4 Q25.7 1.3 25.7 2.6 V8 M25.7 18.3 V23.7 Q25.7 25 24.4 25 H19 M8 25 H2.6 Q1.3 25 1.3 23.7 V18.3" fill="none" stroke="#c40000" stroke-width="2.6"/><circle cx="13.5" cy="13.2" r="7.1" fill="none" stroke="#1060e0" stroke-width="2.4"/><circle cx="13.5" cy="13.2" r="3" fill="#1060e0"/></svg>
<svg style="position:absolute;left:1591.5px;top:679.5px;" width="30" height="30" viewBox="0 0 30 30"><path d="M5.8 0.4 H24.2 L20 8.4 H10 Z" fill="#c40000"/><circle cx="15" cy="18.4" r="7.1" fill="none" stroke="#1060e0" stroke-width="2.5"/><path d="M15 8 V22.4" stroke="#c40000" stroke-width="3"/></svg>
<svg style="position:absolute;left:1680px;top:679.5px;" width="30" height="32" viewBox="0 0 30 32"><path d="M5.8 0.4 H24.2 L20 8.4 H10 Z" fill="#c40000"/><circle cx="15" cy="22" r="5.5" fill="none" stroke="#1060e0" stroke-width="2.7"/><path d="M1.5 22 H28.5" stroke="#1060e0" stroke-width="1.6"/><path d="M15 8 V21.6" stroke="#c40000" stroke-width="3"/></svg>
<svg style="position:absolute;left:1776px;top:679px;" width="27" height="27" viewBox="0 0 27 27"><path d="M1.3 8 V2.6 Q1.3 1.3 2.6 1.3 H8 M19 1.3 H24.4 Q25.7 1.3 25.7 2.6 V8 M25.7 18.3 V23.7 Q25.7 25 24.4 25 H19 M8 25 H2.6 Q1.3 25 1.3 23.7 V18.3" fill="none" stroke="#1060e0" stroke-width="2.6"/><circle cx="13.4" cy="13.2" r="4.6" fill="none" stroke="#1060e0" stroke-width="2.5"/></svg>
<svg style="position:absolute;left:1862.6px;top:679.5px;" width="30" height="30" viewBox="0 0 30 30"><path d="M5.8 0.4 H24.2 L20 8.4 H10 Z" fill="#1060e0"/><path d="M15 8 V22.5" stroke="#1060e0" stroke-width="3"/></svg>
<div class="btn" style="left:1478px;top:750px;width:81px;height:45px;"></div>
<div class="btn" style="left:1566.5px;top:750px;width:81px;height:45px;"></div>
<div class="btn" style="left:1655.5px;top:750px;width:81px;height:45px;"></div>
<div class="btn" style="left:1750px;top:750px;width:81px;height:45px;"></div>
<div class="btn" style="left:1838.3px;top:750px;width:81px;height:45px;"></div>
<svg style="position:absolute;left:1504.2px;top:758.5px;" width="27" height="27" viewBox="0 0 27 27"><path d="M1.3 8 V2.6 Q1.3 1.3 2.6 1.3 H8 M19 1.3 H24.4 Q25.7 1.3 25.7 2.6 V8 M25.7 18.3 V23.7 Q25.7 25 24.4 25 H19 M8 25 H2.6 Q1.3 25 1.3 23.7 V18.3" fill="none" stroke="#c40000" stroke-width="2.6"/><circle cx="13.5" cy="13.2" r="7.1" fill="none" stroke="#1060e0" stroke-width="2.4"/><circle cx="13.5" cy="13.2" r="3" fill="#1060e0"/></svg>
<svg style="position:absolute;left:1591.5px;top:759px;" width="30" height="30" viewBox="0 0 30 30"><path d="M5.8 0.4 H24.2 L20 8.4 H10 Z" fill="#c40000"/><circle cx="15" cy="18.4" r="7.1" fill="none" stroke="#1060e0" stroke-width="2.5"/><path d="M15 8 V22.4" stroke="#c40000" stroke-width="3"/></svg>
<svg style="position:absolute;left:1680px;top:759px;" width="30" height="32" viewBox="0 0 30 32"><path d="M5.8 0.4 H24.2 L20 8.4 H10 Z" fill="#c40000"/><circle cx="15" cy="22" r="5.5" fill="none" stroke="#1060e0" stroke-width="2.7"/><path d="M1.5 22 H28.5" stroke="#1060e0" stroke-width="1.6"/><path d="M15 8 V21.6" stroke="#c40000" stroke-width="3"/></svg>
<svg style="position:absolute;left:1776px;top:758.5px;" width="27" height="27" viewBox="0 0 27 27"><path d="M1.3 8 V2.6 Q1.3 1.3 2.6 1.3 H8 M19 1.3 H24.4 Q25.7 1.3 25.7 2.6 V8 M25.7 18.3 V23.7 Q25.7 25 24.4 25 H19 M8 25 H2.6 Q1.3 25 1.3 23.7 V18.3" fill="none" stroke="#1060e0" stroke-width="2.6"/><circle cx="13.4" cy="13.2" r="4.6" fill="none" stroke="#1060e0" stroke-width="2.5"/></svg>
<svg style="position:absolute;left:1862.6px;top:759px;" width="30" height="30" viewBox="0 0 30 30"><path d="M5.8 0.4 H24.2 L20 8.4 H10 Z" fill="#1060e0"/><path d="M15 8 V22.5" stroke="#1060e0" stroke-width="3"/></svg>
<div class="btn" style="left:1478px;top:829.5px;width:81px;height:45px;"></div>
<div class="btn" style="left:1566.5px;top:829.5px;width:81px;height:45px;"></div>
<div class="btn" style="left:1655.5px;top:829.5px;width:81px;height:45px;"></div>
<div class="btn" style="left:1750px;top:829.5px;width:81px;height:45px;"></div>
<div class="btn" style="left:1838.3px;top:829.5px;width:81px;height:45px;"></div>
<svg style="position:absolute;left:1504.2px;top:838px;" width="27" height="27" viewBox="0 0 27 27"><path d="M1.3 8 V2.6 Q1.3 1.3 2.6 1.3 H8 M19 1.3 H24.4 Q25.7 1.3 25.7 2.6 V8 M25.7 18.3 V23.7 Q25.7 25 24.4 25 H19 M8 25 H2.6 Q1.3 25 1.3 23.7 V18.3" fill="none" stroke="#c40000" stroke-width="2.6"/><circle cx="13.5" cy="13.2" r="7.1" fill="none" stroke="#1060e0" stroke-width="2.4"/><circle cx="13.5" cy="13.2" r="3" fill="#1060e0"/></svg>
<svg style="position:absolute;left:1591.5px;top:838.5px;" width="30" height="30" viewBox="0 0 30 30"><path d="M5.8 0.4 H24.2 L20 8.4 H10 Z" fill="#c40000"/><circle cx="15" cy="18.4" r="7.1" fill="none" stroke="#1060e0" stroke-width="2.5"/><path d="M15 8 V22.4" stroke="#c40000" stroke-width="3"/></svg>
<svg style="position:absolute;left:1680px;top:838.5px;" width="30" height="32" viewBox="0 0 30 32"><path d="M5.8 0.4 H24.2 L20 8.4 H10 Z" fill="#c40000"/><circle cx="15" cy="22" r="5.5" fill="none" stroke="#1060e0" stroke-width="2.7"/><path d="M1.5 22 H28.5" stroke="#1060e0" stroke-width="1.6"/><path d="M15 8 V21.6" stroke="#c40000" stroke-width="3"/></svg>
<svg style="position:absolute;left:1776px;top:838px;" width="27" height="27" viewBox="0 0 27 27"><path d="M1.3 8 V2.6 Q1.3 1.3 2.6 1.3 H8 M19 1.3 H24.4 Q25.7 1.3 25.7 2.6 V8 M25.7 18.3 V23.7 Q25.7 25 24.4 25 H19 M8 25 H2.6 Q1.3 25 1.3 23.7 V18.3" fill="none" stroke="#1060e0" stroke-width="2.6"/><circle cx="13.4" cy="13.2" r="4.6" fill="none" stroke="#1060e0" stroke-width="2.5"/></svg>
<svg style="position:absolute;left:1862.6px;top:838.5px;" width="30" height="30" viewBox="0 0 30 30"><path d="M5.8 0.4 H24.2 L20 8.4 H10 Z" fill="#1060e0"/><path d="M15 8 V22.5" stroke="#1060e0" stroke-width="3"/></svg>
<div class="grp" style="left:838px;top:941px;width:1275px;height:136px;"></div>
<div style="position:absolute;left:843px;top:933px;width:128px;height:18px;background:#f0f0f0;"></div>
<div style="position:absolute;left:847.00px;top:933.63px;font:normal 16.5px/1 'Liberation Sans',sans-serif;letter-spacing:-0.395px;color:#000;white-space:pre;">Vision Calibration</div>
<div style="position:absolute;left:902.20px;top:971.93px;font:normal 16.5px/1 'Liberation Sans',sans-serif;letter-spacing:-0.474px;color:#000;white-space:pre;">Vision Location</div>
<div class="tf" style="left:1017px;top:965px;width:150px;height:29.5px;"></div>
<div style="position:absolute;left:1022.00px;top:971.93px;font:normal 16.5px/1 'Liberation Sans',sans-serif;letter-spacing:-0.737px;color:#000;white-space:pre;">None</div>
<svg style="position:absolute;left:1143.3px;top:974.5px;" width="18" height="14" viewBox="0 0 18 14"><path d="M3.5 4.5 L9 10 L14.5 4.5" fill="none" stroke="#555" stroke-width="1.5"/></svg>
<div class="grp" style="left:838px;top:1091px;width:1275px;height:200px;border-bottom:none;"></div>
<div style="position:absolute;left:843px;top:1083px;width:122px;height:18px;background:#f0f0f0;"></div>
<div style="position:absolute;left:847.00px;top:1083.63px;font:normal 16.5px/1 'Liberation Sans',sans-serif;letter-spacing:-0.322px;color:#000;white-space:pre;">Cloning Settings</div>
<div style="position:absolute;left:944.20px;top:1123.43px;font:normal 16.5px/1 'Liberation Sans',sans-serif;letter-spacing:-0.328px;color:#000;white-space:pre;">Behavior</div>
<svg style="position:absolute;left:1022px;top:1121.8px;" width="21" height="21" viewBox="0 0 21 21"><circle cx="10.4" cy="10.4" r="9" fill="#fff" stroke="#7a7a7a" stroke-width="1.3"/></svg>
<div style="position:absolute;left:1047.80px;top:1123.53px;font:normal 16.5px/1 'Liberation Sans',sans-serif;letter-spacing:-0.119px;color:#000;white-space:pre;">Template</div>
<svg style="position:absolute;left:1022px;top:1165.3px;" width="21" height="21" viewBox="0 0 21 21"><circle cx="10.4" cy="10.4" r="9.6" fill="#0a5cc4"/><circle cx="10.4" cy="10.4" r="3.6" fill="#fff"/></svg>
<div style="position:absolute;left:1047.80px;top:1167.03px;font:normal 16.5px/1 'Liberation Sans',sans-serif;letter-spacing:-0.234px;color:#000;white-space:pre;">Clones from Template</div>
<svg style="position:absolute;left:1022px;top:1208.8px;" width="21" height="21" viewBox="0 0 21 21"><circle cx="10.4" cy="10.4" r="9" fill="#fff" stroke="#7a7a7a" stroke-width="1.3"/></svg>
<div style="position:absolute;left:1047.80px;top:1210.53px;font:normal 16.5px/1 'Liberation Sans',sans-serif;letter-spacing:-0.535px;color:#000;white-space:pre;">Locked</div>
<div class="grp" style="left:1229px;top:1116px;width:587px;height:118px;"></div>
<div class="btn" style="left:1239.7px;top:1125.4px;width:571.5px;height:45.3px;border-radius:6px;"></div>
<svg style="position:absolute;left:1355px;top:1131px;" width="22" height="30" viewBox="0 0 22 30"><path d="M7 1.5 H15 V11 H20.5 L11 21 L1.5 11 H7 Z" fill="#c40000"/><path d="M1 25 H21" stroke="#c40000" stroke-width="2.4"/></svg>
<div style="position:absolute;left:1389.70px;top:1139.03px;font:normal 16.5px/1 'Liberation Sans',sans-serif;letter-spacing:-0.173px;color:#000;white-space:pre;">Clone Tool Changer Settings from Template</div>
<div style="position:absolute;left:1317.00px;top:1188.73px;font:normal 16.5px/1 'Liberation Sans',sans-serif;letter-spacing:-0.481px;color:#000;white-space:pre;">Locations?</div>
<svg style="position:absolute;left:1408px;top:1186px;" width="22" height="22" viewBox="0 0 22 22"><rect x="1" y="1.2" width="19" height="19.6" rx="4" fill="#0a5cc4"/><path d="M5.6 11.2 L9 14.6 L15.4 7.8" fill="none" stroke="#fff" stroke-width="1.4"/></svg>
<div style="position:absolute;left:1643.80px;top:1188.73px;font:normal 16.5px/1 'Liberation Sans',sans-serif;letter-spacing:-0.499px;color:#000;white-space:pre;">Vision Calibration?</div>
<svg style="position:absolute;left:1787px;top:1186px;" width="22" height="22" viewBox="0 0 22 22"><rect x="1" y="1.2" width="19" height="19.6" rx="4" fill="#0a5cc4"/><path d="M5.6 11.2 L9 14.6 L15.4 7.8" fill="none" stroke="#fff" stroke-width="1.4"/></svg>
<div style="position:absolute;left:1231px;top:1256px;width:583px;height:15px;background:#f9f9f9;border:1px solid #e8e8e8;border-bottom:none;border-radius:6px 6px 0 0;"></div>
<svg style="position:absolute;left:1353px;top:1264px;" width="22" height="8" viewBox="0 0 22 8"><path d="M1 2.5 H21 L18.5 7.5 H3.5 Z" fill="#9a9a9a"/></svg>
<div style="position:absolute;left:832px;top:1271px;width:1315px;height:58px;background:#f0f0f0;"></div>
<div class="btn" style="left:1950px;top:1281.5px;width:86px;height:29.5px;background:#f7f7f7;border-color:#ebebeb;border-radius:6px;"></div>
<div style="position:absolute;left:1971.35px;top:1287.53px;font:normal 16.5px/1 'Liberation Sans',sans-serif;letter-spacing:0.039px;color:#a2a2ac;white-space:pre;">Reset</div>
<div class="btn" style="left:2049px;top:1281.5px;width:83px;height:29.5px;background:#f7f7f7;border-color:#ebebeb;border-radius:6px;"></div>
<div style="position:absolute;left:2070.35px;top:1287.53px;font:normal 16.5px/1 'Liberation Sans',sans-serif;letter-spacing:-0.195px;color:#a2a2ac;white-space:pre;">Apply</div>
<div style="position:absolute;left:8px;top:1333px;width:895px;height:27px;background:#f0f0f0;border-top:2px solid #868686;border-left:2px solid #868686;border-right:1px solid #fff;border-bottom:3px solid #fff;box-shadow:inset 0 1px 0 #cfcfcf;"></div>
<div style="position:absolute;left:924.5px;top:1333px;width:339.5px;height:27px;background:#f0f0f0;border-top:2px solid #868686;border-left:2px solid #868686;border-right:1px solid #fff;border-bottom:3px solid #fff;box-shadow:inset 0 1px 0 #cfcfcf;"></div>
<div style="position:absolute;left:930.50px;top:1338.23px;font:normal 16.5px/1 'Liberation Sans',sans-serif;letter-spacing:-0.067px;color:#000;white-space:pre;">Placements: 0 / 0 Total | 0 / 0 Selected Board</div>
<div style="position:absolute;left:1273.5px;top:1335px;width:300px;height:22px;background:#e6e6e6;border:1px solid #bcbcbc;"></div>
<div style="position:absolute;left:1274px;top:1336px;width:3px;height:20px;background:#0a64d8;"></div>
<div style="position:absolute;left:1409.00px;top:1336.03px;font:normal 16.5px/1 'Liberation Sans',sans-serif;letter-spacing:0.576px;color:#1a6ae0;white-space:pre;">0%</div>
<div style="position:absolute;left:1583px;top:1332px;width:569px;height:29px;background:#b9ffb9;border-top:2px solid #6b8a6b;border-left:2px solid #6b8a6b;border-right:2px solid #fff;border-bottom:2px solid #fff;"></div>
<div style="position:absolute;left:1584.50px;top:1340.29px;font:normal 17.5px/1 'Liberation Mono',monospace;letter-spacing:1.510px;color:#1c1c1c;white-space:pre;">X:16.496    Y:88.530    Z:33.600    C:200.000</div>
<svg style="position:absolute;left:1100px;top:540px;pointer-events:none;" width="700" height="560" viewBox="1100 540 700 560"><rect x="1650.2" y="569" width="89.6" height="336.4" rx="3.5" fill="none" stroke="#ff0000" stroke-width="8"/><polygon points="1632.1,910.5 1583.4,910.3 1592.0,919.8 1130.1,1078.1 1132.9,1086.1 1594.7,927.8 1593.8,940.6" fill="#ff0000"/><path d="M1699.8 1029.6 V1052.2 L1704.8 1047.4 L1708.6 1055.6 L1712 1054.2 L1708.4 1046 H1715.6 Z" fill="#fff" stroke="#000" stroke-width="1.1" stroke-linejoin="miter"/></svg>
</body></html>
